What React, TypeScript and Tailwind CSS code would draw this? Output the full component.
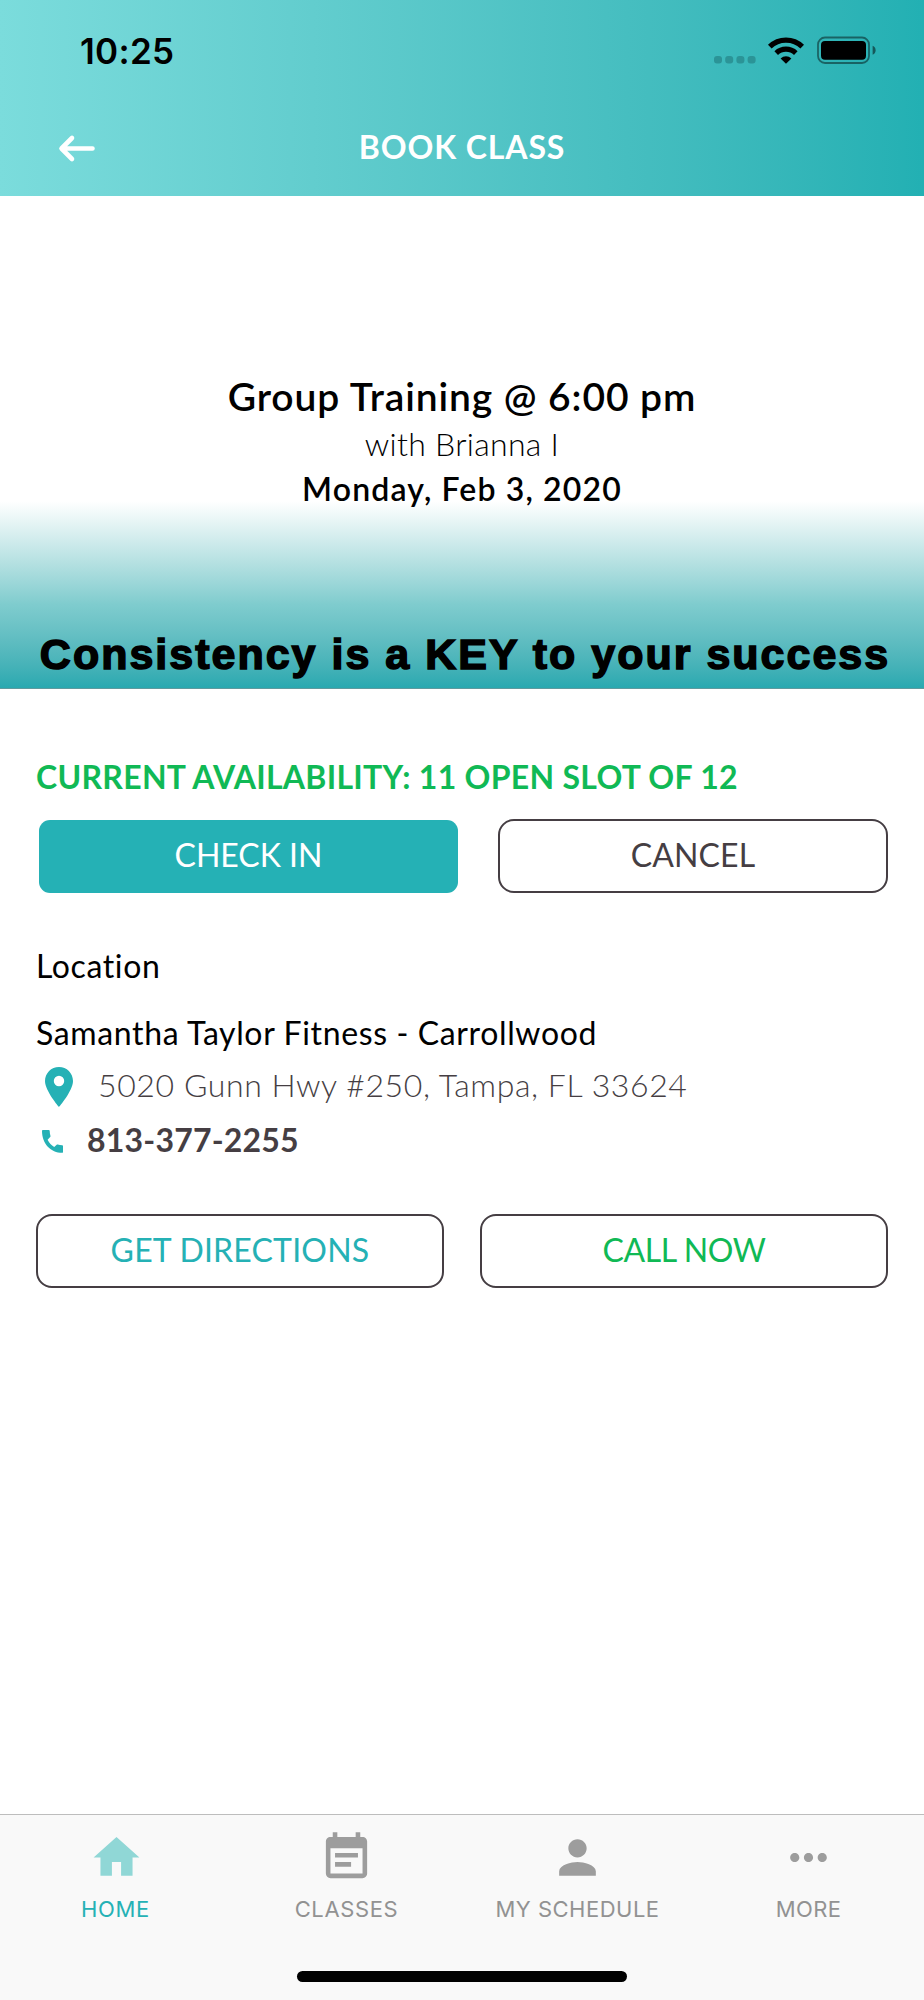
import type { ReactNode } from 'react';
import { MdEventNote, MdHome, MdMoreHoriz, MdPerson } from 'react-icons/md';

const tabs = [
  { label: 'HOME', icon: MdHome, active: true, tracking: 'tracking-[0.7px]' },
  { label: 'CLASSES', icon: MdEventNote, active: false, tracking: 'tracking-[0.64px]' },
  { label: 'MY SCHEDULE', icon: MdPerson, active: false, tracking: 'tracking-[0.5px]' },
  { label: 'MORE', icon: MdMoreHoriz, active: false, tracking: 'tracking-[0.4px]' },
];

function StatusBar() {
  return (
    <div className="flex justify-between pt-[30px] pl-[80px] pr-[48px]">
      <span className="pt-px font-['Inter',sans-serif] text-[35px] leading-10 font-semibold tracking-[0.3px] text-black">10:25</span>
      <svg className="h-10 w-[164px]" viewBox="0 0 164 40">
        {/* Signal dots */}
        <g fill="#2b9497">
          <rect x="2" y="26" width="8" height="7.5" rx="3" />
          <rect x="13.2" y="26" width="8" height="7.5" rx="3" />
          <rect x="24.4" y="26" width="8" height="7.5" rx="3" />
          <rect x="35.6" y="26" width="8" height="7.5" rx="3" />
        </g>
        {/* Wifi */}
        <g fill="none" stroke="#000" strokeWidth="5.2">
          <path d="M57.8 16.6a23.3 23.3 0 0 1 32.4 0" />
          <path d="M64.2 23.1a14.3 14.3 0 0 1 19.6 0" />
        </g>
        <path d="M68.6 28.4a8 8 0 0 1 10.8 0L74 33.8z" fill="#000" />
        {/* Battery */}
        <rect x="106" y="7.5" width="51" height="25.5" rx="7" fill="none" stroke="#000" strokeOpacity="0.45" strokeWidth="1.8" />
        <rect x="109" y="11" width="45" height="18.8" rx="4" fill="#000" />
        <path d="M160.6 15.8c4 1.4 4 7.6 0 9z" fill="#000" fillOpacity="0.5" />
      </svg>
    </div>
  );
}

function OutlineButton({ className, children }: { className: string; children: ReactNode }) {
  return (
    <button className={`flex h-[74px] items-center justify-center rounded-[16px] border-2 border-[#453e43] bg-white pb-[3px] text-[32px] leading-10 ${className}`}>
      {children}
    </button>
  );
}

export default function App() {
  return (
    <div className="flex h-[2000px] w-[924px] flex-col bg-white font-['Lato',sans-serif] text-[32px] leading-10 text-black">
      {/* Header */}
      <header className="h-[196px] bg-linear-to-r from-[#7bdcdc] to-[#22b0b3]">
        <StatusBar />
        <div className="mt-[56px] grid grid-cols-[1fr_auto_1fr] items-center">
          <svg className="ml-[57px] h-10 w-10" viewBox="0 0 40 40" fill="none" stroke="#fff" strokeWidth="4.6" strokeLinecap="round" strokeLinejoin="round">
            <path d="M35.5 21.5H5M15 11L4.5 21.5L15 32" />
          </svg>
          <h1 className="font-bold tracking-[0.9px] text-white">BOOK CLASS</h1>
        </div>
      </header>

      {/* Class summary */}
      <section className="flex h-[493px] flex-col items-center border-b border-[#5f9a9e] bg-linear-to-b from-white from-62% via-[#7fccce] via-83% to-[#28a9b0] pt-[176px] whitespace-nowrap">
        <h2 className="text-[39px] leading-[48px] font-semibold tracking-[0.9px]">Group Training @ 6:00 pm</h2>
        <p className="mt-1 font-light tracking-[0.3px]">with Brianna I</p>
        <p className="mt-[5px] font-semibold tracking-[1.14px]">Monday, Feb 3, 2020</p>
        <p className="mt-[121px] ml-1.5 font-['Liberation_Sans',sans-serif] text-[43px] leading-[48px] font-bold tracking-[2px] [-webkit-text-stroke:1.5px_#000]">
          Consistency is a KEY to your success
        </p>
      </section>

      <main className="flex flex-1 flex-col px-9 pt-[68px] whitespace-nowrap">
        <p className="font-bold tracking-[0.28px] text-[#10b955]">CURRENT AVAILABILITY: 11 OPEN SLOT OF 12</p>
        <div className="mt-[22px] flex h-[75px] justify-between pl-[3px]">
          <button className="my-px flex w-[419px] items-center justify-center rounded-[11px] bg-[#25b1b5] pb-[3px] text-white">
            CHECK IN
          </button>
          <OutlineButton className="w-[390px] tracking-[0.1px] text-[#453e43]">CANCEL</OutlineButton>
        </div>

        {/* Location */}
        <h3 className="mt-[52px] tracking-[0.6px]">Location</h3>
        <p className="mt-[27px] tracking-[0.63px]">Samantha Taylor Fitness - Carrollwood</p>
        <div className="mt-3 flex h-10 text-[#453e43]">
          <svg className="mt-0.5 ml-[9px] h-10 w-7" viewBox="0 0 28 40">
            <path
              d="M14 0C6.2 0 0 6.2 0 14c0 9.8 14 26 14 26s14-16.2 14-26C28 6.2 21.8 0 14 0zm0 19.2a5.2 5.2 0 1 1 0-10.4 5.2 5.2 0 0 1 0 10.4z"
              fill="#25b1b5"
            />
          </svg>
          <span className="ml-[25px] font-light tracking-[0.6px]">5020 Gunn Hwy #250, Tampa, FL 33624</span>
        </div>
        <div className="mt-[15px] flex text-[#453e43]">
          <svg className="mt-[10px] ml-1.5 h-[23px] w-[21px]" viewBox="0 0 21 23">
            <path
              d="M.8 0h6c.6 0 .9.4.9.9 0 1.800.3 3.500.8 5 .1.4 0 .8-.3 1.100L5.6 9.8c1.7 3.4 3.7 5.5 6.6 7.2l2.500-2.300c.3-.3.700-.4 1.100-.2 1.300.5 2.800.8 4.400.8.500 0 .8.300.8.800v5.800c0 .6-.3.900-.8.900C8.800 22.800 0 13.500 0 .9 0 .4.300 0 .8 0z"
              fill="#25b1b5"
            />
          </svg>
          <span className="ml-[24px] font-bold tracking-[0.2px]">813-377-2255</span>
        </div>

        <div className="mt-[54px] flex justify-between">
          <OutlineButton className="w-[408px] tracking-[0.2px] text-[#25b1b5]">GET DIRECTIONS</OutlineButton>
          <OutlineButton className="w-[408px] tracking-[-0.4px] text-[#10b955]">CALL NOW</OutlineButton>
        </div>
      </main>

      {/* Tab bar */}
      <footer className="flex h-[186px] flex-col border-t border-[#bdbdbd] bg-[#f9f9f9]">
        <nav className="grid grid-cols-4 font-['Inter',sans-serif] text-[22px] leading-7">
          {tabs.map(({ label, icon: Icon, active, tracking }) => (
            <div key={label} className="flex flex-col items-center pt-[15px]">
              <Icon className={`h-[55px] w-[55px] ${active ? 'ml-0.5 text-[#90d7d6]' : 'text-[#9d9d9d]'}`} />
              <span className={`mt-[10px] ${tracking} ${active ? 'text-[#25b1b5]' : 'text-[#929292]'}`}>{label}</span>
            </div>
          ))}
        </nav>
        <div className="mt-[48px] h-[11px] w-[330px] self-center rounded-full bg-black" />
      </footer>
    </div>
  );
}
